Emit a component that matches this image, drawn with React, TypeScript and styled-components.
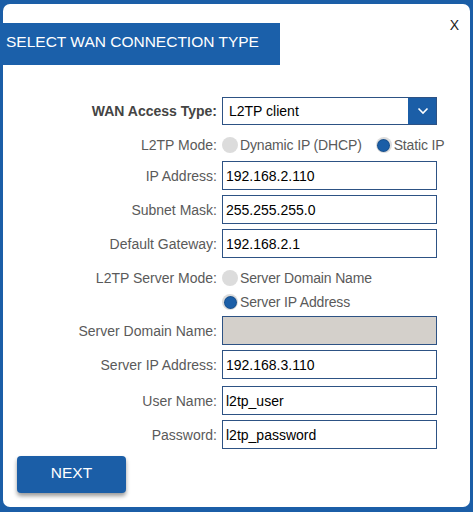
import React from "react";
import styled, { createGlobalStyle } from "styled-components";

const GlobalStyle = createGlobalStyle`
  html, body { margin: 0; padding: 0; }
  body {
    font-family: "Liberation Sans", Arial, sans-serif;
    background: #1b5ea7;
  }
`;

const Frame = styled.div`
  width: 473px;
  height: 512px;
  box-sizing: border-box;
  background: #1b5ea7;
  padding: 4px 3px 5px 3px;
`;

const Panel = styled.div`
  position: relative;
  height: 100%;
  background: #ffffff;
  border-radius: 7px;
  display: flex;
  flex-direction: column;
`;

const Banner = styled.h1`
  margin: 19px 0 0 -3px;
  width: 280px;
  height: 42px;
  box-sizing: border-box;
  background: #1b60aa;
  color: #ffffff;
  font-weight: normal;
  font-size: 15.5px;
  display: flex;
  align-items: center;
  padding: 0 0 4px 6px;
  white-space: nowrap;
`;

const Close = styled.button`
  position: absolute;
  top: 14px;
  right: 11px;
  background: none;
  border: 0;
  padding: 0;
  font-family: "Liberation Sans", Arial, sans-serif;
  font-size: 14px;
  line-height: 14px;
  color: #222;
  cursor: pointer;
`;

const Form = styled.form`
  display: flex;
  flex-direction: column;
  margin: 32px 0 0 0;
`;

const Row = styled.div<{ $mt: number; $h: number; $top?: boolean }>`
  display: grid;
  grid-template-columns: 214px 215px;
  column-gap: 5px;
  margin-top: ${(p) => p.$mt}px;
  min-height: ${(p) => p.$h}px;
  align-items: ${(p) => (p.$top ? "start" : "center")};
`;

const Label = styled.label<{ $bold?: boolean; $lh?: number }>`
  text-align: right;
  font-size: 14px;
  white-space: nowrap;
  color: ${(p) => (p.$bold ? "#444444" : "#5a5a5a")};
  font-weight: ${(p) => (p.$bold ? "bold" : "normal")};
  line-height: ${(p) => (p.$lh ? `${p.$lh}px` : "normal")};
`;

const TextInput = styled.input<{ $disabled?: boolean }>`
  width: 215px;
  height: 29px;
  box-sizing: border-box;
  border: 1px solid #2d5284;
  border-radius: 0;
  padding: 0 3px;
  margin: 0;
  font-family: "Liberation Sans", Arial, sans-serif;
  font-size: 14px;
  color: #000000;
  background: ${(p) => (p.$disabled ? "#d4d0cb" : "#ffffff")};
  outline: none;
`;

const SelectBox = styled.div`
  width: 215px;
  height: 28px;
  box-sizing: border-box;
  border: 1px solid #2d5284;
  display: flex;
  align-items: stretch;
  overflow: hidden;
`;

const SelectValue = styled.span`
  flex: 1;
  display: flex;
  align-items: center;
  padding-left: 6px;
  font-size: 14px;
  color: #000000;
`;

const SelectButton = styled.span`
  width: 29px;
  margin: -1px -1px -1px 0;
  background: #1b5ea7;
  display: flex;
  align-items: center;
  justify-content: center;
`;

const RadioGroup = styled.div<{ $column?: boolean }>`
  display: flex;
  flex-direction: ${(p) => (p.$column ? "column" : "row")};
  white-space: nowrap;
`;

const Option = styled.span<{ $gap?: number }>`
  display: flex;
  align-items: center;
  height: 24px;
  margin-left: ${(p) => p.$gap ?? 0}px;
  font-size: 14px;
  letter-spacing: -0.15px;
  color: #5a5a5a;
`;

const Radio = styled.span<{ $checked?: boolean }>`
  width: 16px;
  height: 16px;
  border-radius: 50%;
  background: #dcdcdc;
  margin-right: 2px;
  display: flex;
  align-items: center;
  justify-content: center;
  flex-shrink: 0;
  &::after {
    content: "";
    display: ${(p) => (p.$checked ? "block" : "none")};
    width: 11px;
    height: 11px;
    border-radius: 50%;
    background: #1b5ea7;
    box-shadow: 0 0 0 1px #174f8c;
  }
`;

const NextButton = styled.button`
  align-self: flex-start;
  margin: 7px 0 0 14px;
  width: 109px;
  height: 37px;
  border: 0;
  border-radius: 4px;
  background: #1b5ea7;
  color: #ffffff;
  font-family: "Liberation Sans", Arial, sans-serif;
  font-size: 15.5px;
  padding: 0 0 3px 0;
  box-shadow: 0 3px 4px rgba(0, 0, 0, 0.4);
  cursor: pointer;
`;

type Field = { label: string; value: string; mt: number; disabled?: boolean };

const staticFields: Field[] = [
  { label: "IP Address:", value: "192.168.2.110", mt: 4 },
  { label: "Subnet Mask:", value: "255.255.255.0", mt: 5 },
  { label: "Default Gateway:", value: "192.168.2.1", mt: 5 },
];

const serverFields: Field[] = [
  { label: "Server Domain Name:", value: "", mt: 2, disabled: true },
  { label: "Server IP Address:", value: "192.168.3.110", mt: 5 },
  { label: "User Name:", value: "l2tp_user", mt: 7 },
  { label: "Password:", value: "l2tp_password", mt: 5 },
];

const InputRow = ({ f }: { f: Field }) => (
  <Row $mt={f.mt} $h={29}>
    <Label>{f.label}</Label>
    <TextInput $disabled={f.disabled} readOnly value={f.value} />
  </Row>
);

export default function App() {
  return (
    <>
      <GlobalStyle />
      <Frame>
        <Panel>
          <Close type="button">X</Close>
          <Banner>SELECT WAN CONNECTION TYPE</Banner>
          <Form onSubmit={(e) => e.preventDefault()}>
            <Row $mt={0} $h={28}>
              <Label $bold>WAN Access Type:</Label>
              <SelectBox>
                <SelectValue>L2TP client</SelectValue>
                <SelectButton>
                  <svg width="12" height="8" viewBox="0 0 12 8">
                    <path d="M1.5 1.5 L6 6 L10.5 1.5" fill="none" stroke="#ffffff" strokeWidth="1.6" />
                  </svg>
                </SelectButton>
              </SelectBox>
            </Row>
            <Row $mt={8} $h={24}>
              <Label>L2TP Mode:</Label>
              <RadioGroup>
                <Option>
                  <Radio />
                  Dynamic IP (DHCP)
                </Option>
                <Option $gap={14}>
                  <Radio $checked />
                  Static IP
                </Option>
              </RadioGroup>
            </Row>
            {staticFields.map((f) => (
              <InputRow key={f.label} f={f} />
            ))}
            <Row $mt={8} $h={48} $top>
              <Label $lh={24}>L2TP Server Mode:</Label>
              <RadioGroup $column>
                <Option>
                  <Radio />
                  Server Domain Name
                </Option>
                <Option>
                  <Radio $checked />
                  Server IP Address
                </Option>
              </RadioGroup>
            </Row>
            {serverFields.map((f) => (
              <InputRow key={f.label} f={f} />
            ))}
            <NextButton type="submit">NEXT</NextButton>
          </Form>
        </Panel>
      </Frame>
    </>
  );
}
